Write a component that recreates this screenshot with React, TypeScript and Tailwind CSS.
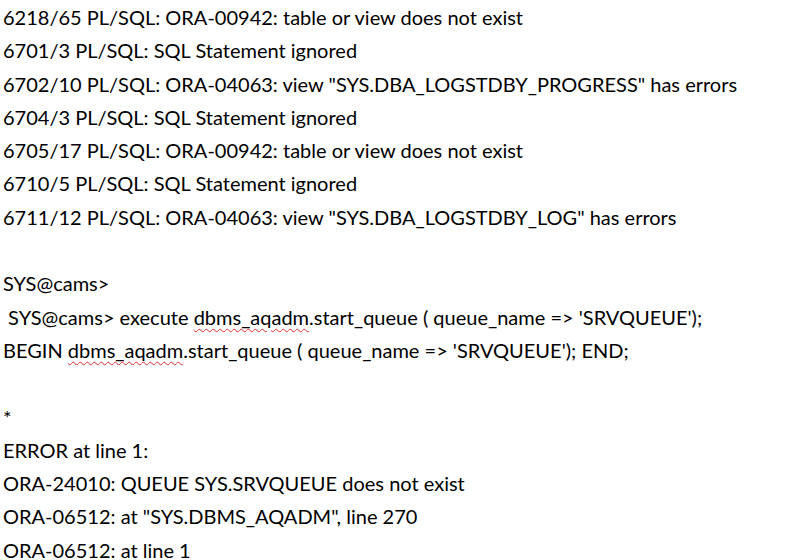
import React from 'react';

const Squiggle: React.FC<{ children: React.ReactNode }> = ({ children }) => (
  <span className="underline decoration-wavy decoration-[#e03030] decoration-1 underline-offset-[3px]">{children}</span>
);

const lines: React.ReactNode[] = [
  '6218/65 PL/SQL: ORA-00942: table or view does not exist',
  '6701/3 PL/SQL: SQL Statement ignored',
  '6702/10 PL/SQL: ORA-04063: view "SYS.DBA_LOGSTDBY_PROGRESS" has errors',
  '6704/3 PL/SQL: SQL Statement ignored',
  '6705/17 PL/SQL: ORA-00942: table or view does not exist',
  '6710/5 PL/SQL: SQL Statement ignored',
  '6711/12 PL/SQL: ORA-04063: view "SYS.DBA_LOGSTDBY_LOG" has errors',
  '',
  'SYS@cams>',
  <>
    {' SYS@cams> execute '}
    <Squiggle>dbms_aqadm</Squiggle>
    {".start_queue ( queue_name => 'SRVQUEUE');"}
  </>,
  <>
    {'BEGIN '}
    <Squiggle>dbms_aqadm</Squiggle>
    {".start_queue ( queue_name => 'SRVQUEUE'); END;"}
  </>,
  '',
  '*',
  'ERROR at line 1:',
  'ORA-24010: QUEUE SYS.SRVQUEUE does not exist',
  'ORA-06512: at "SYS.DBMS_AQADM", line 270',
  'ORA-06512: at line 1',
];

const App: React.FC = () => {
  return (
    <div className="w-[792px] h-[560px] overflow-hidden bg-white pl-[3px] pt-[1px] font-['Lato',sans-serif] text-[20px] leading-[33.3px] text-black">
      {lines.map((l, i) => (
        <div key={i} className="h-[33.3px] whitespace-pre">
          {l}
        </div>
      ))}
    </div>
  );
};

export default App;
